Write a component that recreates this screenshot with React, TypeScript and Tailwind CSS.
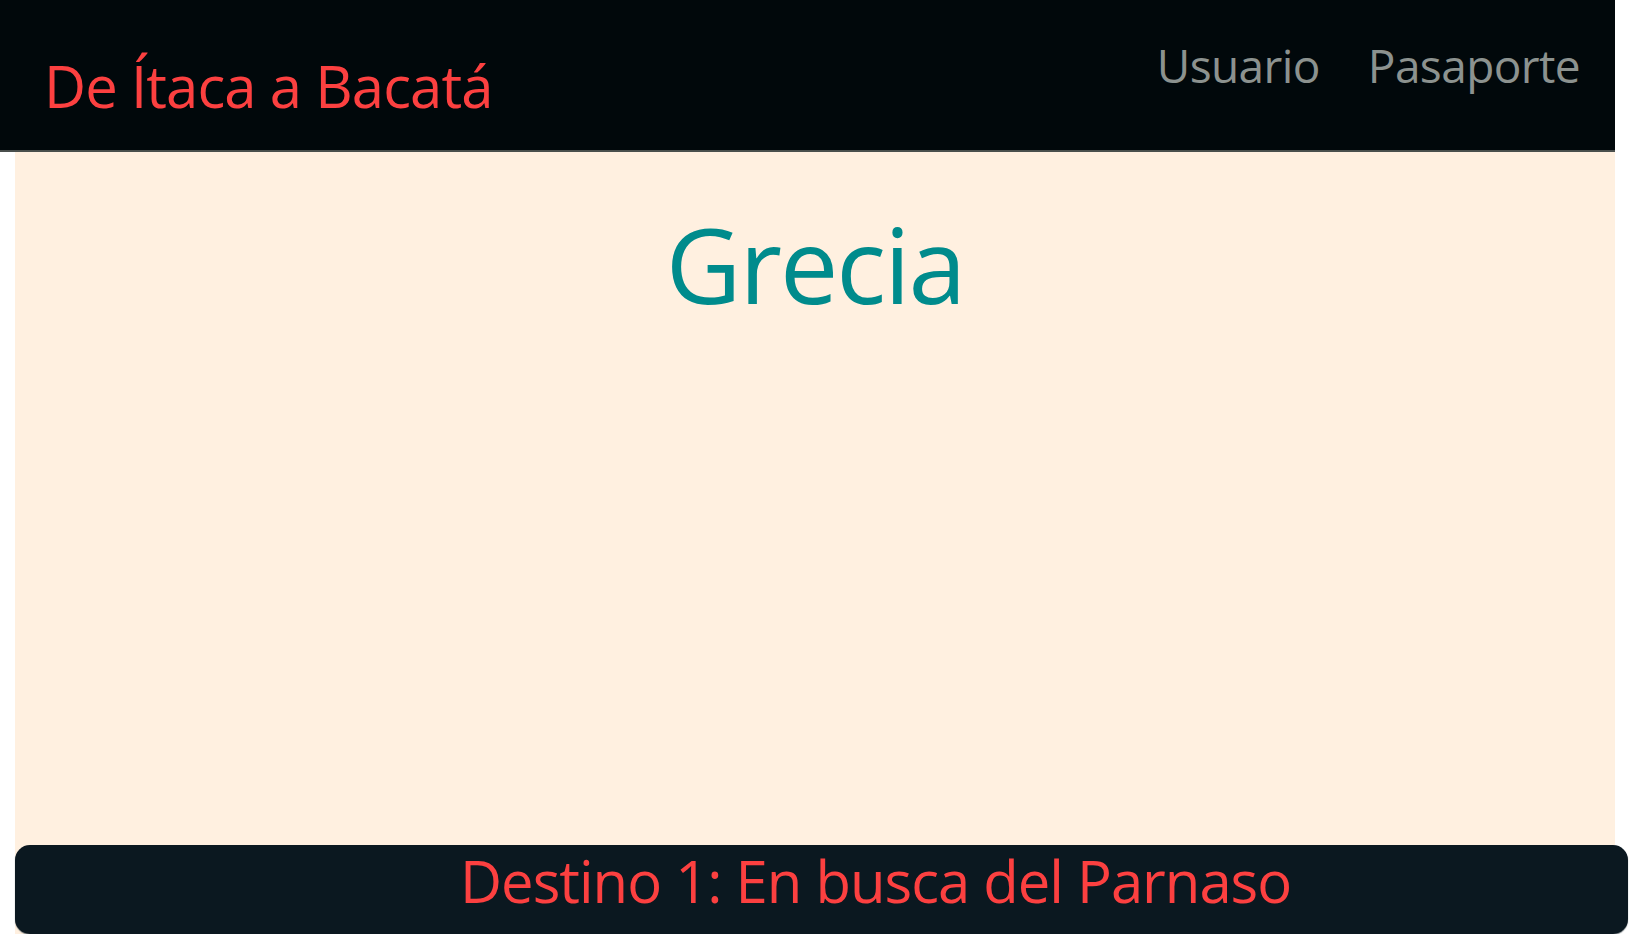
export default function App() {
  const font = { fontFamily: '"Open Sans", "Noto Sans", sans-serif' };
  return (
    <div className="w-[1629px] h-[934px] bg-white flex flex-col overflow-hidden" style={font}>
      <header className="w-[1615px] h-[152px] shrink-0 bg-[#01080b] border-b-2 border-[#4a4f4c] relative">
        <div className="absolute left-[44px] top-[57px] text-[58px] tracking-[-0.9px] leading-none text-[#fc4040] whitespace-nowrap">De Ítaca a Bacatá</div>
        <nav className="absolute right-[35px] top-[42px] flex gap-[48px] text-[46px] tracking-[-0.6px] leading-none text-[#8c928f]">
          <span>Usuario</span>
          <span>Pasaporte</span>
        </nav>
      </header>
      <main className="ml-[15px] w-[1600px] flex-1 bg-[#fff0e0] flex flex-col">
        <h1 className="text-center text-[104px] tracking-[-2px] leading-none text-[#008b8c] mt-[60px]">Grecia</h1>
        <div className="flex-1" />
        <footer className="w-[1613px] h-[89px] shrink-0 rounded-[15px] bg-[#0b1820] shadow-[0_1px_1px_rgba(80,90,95,0.8)] flex items-start pt-[7px]">
          <span className="ml-[445px] text-[58px] tracking-[-1px] leading-none text-[#fc4040] whitespace-nowrap">Destino 1: En busca del Parnaso</span>
        </footer>
      </main>
    </div>
  );
}
